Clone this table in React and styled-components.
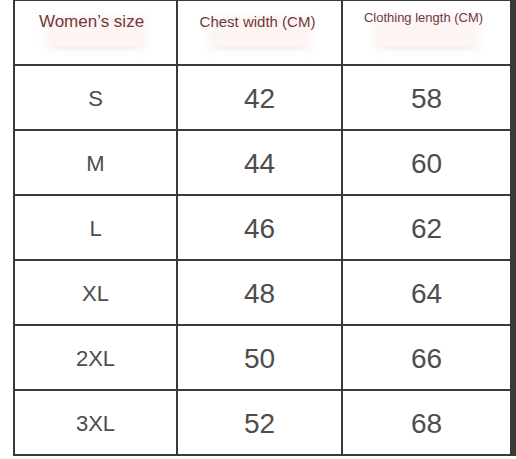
import React from 'react'
import styled, { createGlobalStyle } from 'styled-components'

const GlobalStyle = createGlobalStyle`
  html, body {
    margin: 0;
    padding: 0;
    background: #fff;
  }
  body {
    font-family: "Liberation Sans", Arial, sans-serif;
  }
`

const Page = styled.div`
  width: 516px;
  height: 459px;
  background: #fff;
  overflow: hidden;
`

const Table = styled.div`
  margin-left: 13px;
  width: 499px;
  display: grid;
  grid-template-columns: 161px 163px 167px;
  grid-auto-rows: 63px;
  gap: 2px;
  padding: 1px 2px 2px 2px;
  background: #3a3a3a;
`

const HeadCell = styled.div`
  position: relative;
  background: #fff;
  display: flex;
  justify-content: center;
  align-items: flex-start;
  padding-top: ${p => p.$top}px;
  padding-right: ${p => p.$shift || 0}px;
  box-sizing: border-box;
  color: #6f3a3a;
  font-size: ${p => p.$size}px;
  line-height: 1.2;
  white-space: nowrap;

  &::before {
    content: '';
    position: absolute;
    left: 18%;
    right: 18%;
    top: 14px;
    bottom: 14px;
    background: #fcf5f3;
    filter: blur(4px);
  }

  &::after {
    content: '';
    position: absolute;
    left: 24%;
    right: 24%;
    top: 46px;
    height: 2px;
    background: #f6e9e7;
    filter: blur(1.5px);
  }
`

const Label = styled.span`
  position: relative;
  z-index: 1;
`

const Cell = styled.div`
  background: #fff;
  display: flex;
  justify-content: center;
  align-items: center;
  padding-top: 3px;
  box-sizing: border-box;
  color: #4d4d4d;
  font-size: ${p => (p.$big ? 28 : 22)}px;
`

const rows = [
  ['S', 42, 58],
  ['M', 44, 60],
  ['L', 46, 62],
  ['XL', 48, 64],
  ['2XL', 50, 66],
  ['3XL', 52, 68],
]

export default function App() {
  return (
    <Page>
      <GlobalStyle />
      <Table>
        <HeadCell $size={17} $top={11} $shift={8}>
          <Label>Women’s size</Label>
        </HeadCell>
        <HeadCell $size={15} $top={12} $shift={4}>
          <Label>Chest width (CM)</Label>
        </HeadCell>
        <HeadCell $size={13} $top={9} $shift={6}>
          <Label>Clothing length (CM)</Label>
        </HeadCell>
        {rows.map(([size, chest, length]) => (
          <React.Fragment key={size}>
            <Cell>{size}</Cell>
            <Cell $big>{chest}</Cell>
            <Cell $big>{length}</Cell>
          </React.Fragment>
        ))}
      </Table>
    </Page>
  )
}
